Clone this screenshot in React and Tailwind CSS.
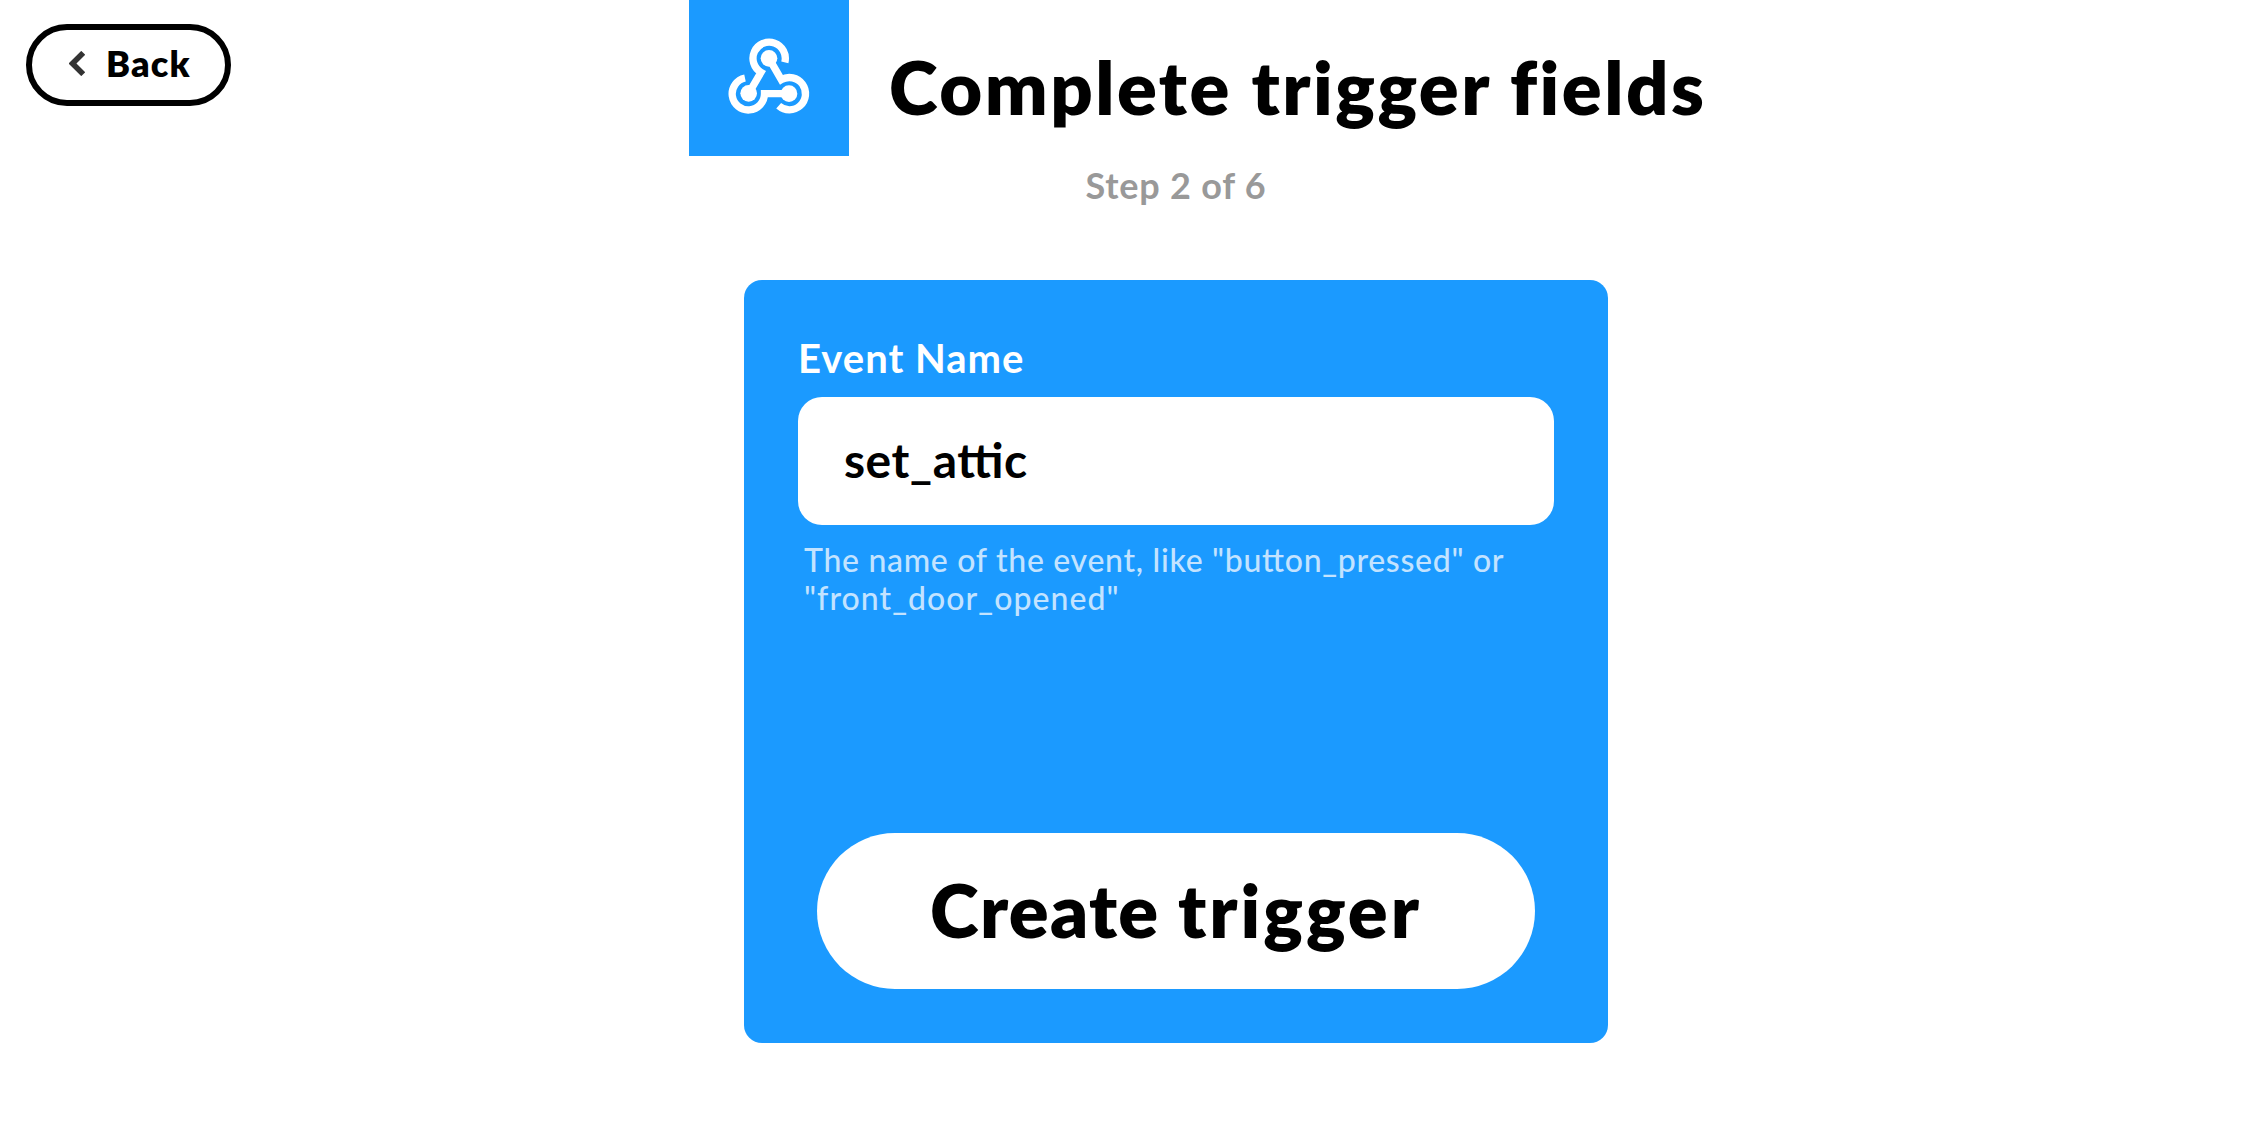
function WebhooksLogo() {
  return (
    <svg viewBox="0 0 480 468" className="h-[156px] w-[160px]" fill="none" stroke="#fff" strokeWidth="22">
      <g transform="translate(-27 0)">
        <path d="M314.5 187 A48.5 48.5 0 1 0 243 217 L206 280" />
        <path d="M195 234 A48.5 48.5 0 1 0 253.5 281 L328 281" />
        <path d="M296 317.5 A48.5 48.5 0 1 0 304 239 L267 175" />
        <g fill="#fff" stroke="none">
          <circle cx="267" cy="175" r="25" />
          <circle cx="206" cy="280" r="25" />
          <circle cx="327" cy="281" r="25" />
        </g>
      </g>
    </svg>
  );
}

function BackButton() {
  return (
    <button className="mt-6 ml-[26px] flex h-[82px] w-[205px] items-center rounded-full border-6 border-black pl-[37px]">
      <svg viewBox="0 0 16 25" className="mb-[3px] h-[25px] w-4" fill="none" stroke="#333" strokeWidth="5.5">
        <path d="M14.2 1.8 L3.5 12.5 L14.2 23.2" />
      </svg>
      <span className="pb-1 pl-[21px] text-[36px] leading-none font-extrabold tracking-[1.2px]">Back</span>
    </button>
  );
}

export default function App() {
  return (
    <div className="relative h-[1122px] w-[2268px] overflow-hidden bg-white font-['Lato',sans-serif] text-black">
      <div className="absolute top-0 left-0">
        <BackButton />
      </div>

      <header>
        <div className="flex h-[156px] gap-10 pl-[689px]">
          <div className="bg-[#1b9aff]">
            <WebhooksLogo />
          </div>
          <h1 className="flex items-center pt-[17px] text-[74px] leading-none font-extrabold tracking-[2.5px] whitespace-nowrap">
            Complete trigger fields
          </h1>
        </div>
        <p className="h-14 pl-[84px] text-center text-[36px] leading-[58px] font-bold tracking-[0.8px] text-[#999]">
          Step 2 of 6
        </p>
      </header>

      <main className="mt-[68px] ml-[744px] flex h-[763px] w-[864px] flex-col rounded-[18px] bg-[#1b9aff] px-[54px] pt-[53px] pb-[54px]">
        <label className="mb-[17px] h-[47px] text-[40px] leading-[50px] font-bold tracking-[1px] text-white">
          Event Name
        </label>
        <div className="flex h-32 w-[756px] items-center rounded-3xl bg-white pb-[3px] pl-[46px] text-[48px] leading-none font-bold tracking-[0.5px] [font-feature-settings:'liga'_1]">
          set_attic
        </div>
        <p className="mt-4 pl-[6px] text-[32px] leading-[38px] font-medium whitespace-nowrap text-[#c3e3ff] [font-feature-settings:'liga'_1]">
          <span className="block tracking-[0.7px]">The name of the event, like "button_pressed" or</span>
          <span className="block tracking-[1.05px]">"front_door_opened"</span>
        </p>
        <button className="mx-[19px] mt-auto h-[156px] rounded-full bg-white pb-[3px] text-[74px] leading-none font-extrabold">
          <span className="tracking-[1.3px]">Create </span>
          <span className="tracking-[3px]">trigger</span>
        </button>
      </main>
    </div>
  );
}
